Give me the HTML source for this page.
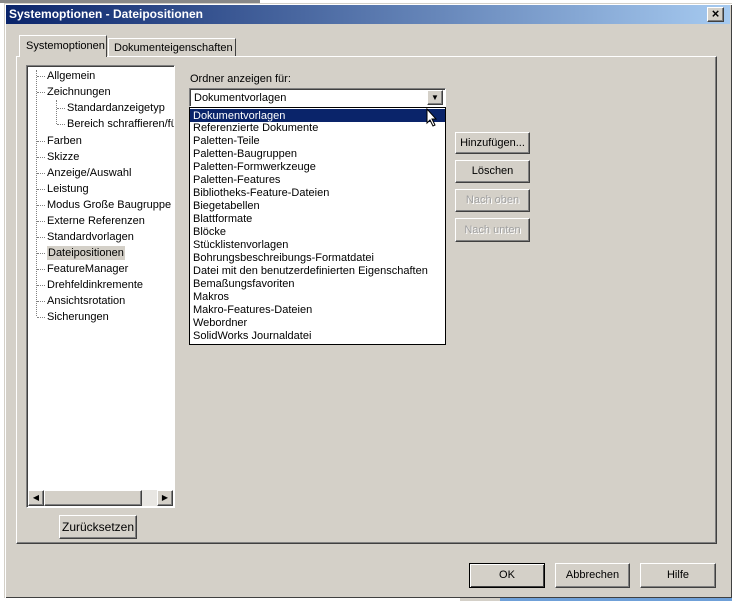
<!DOCTYPE html>
<html><head><meta charset="utf-8"><style>
*{margin:0;padding:0;box-sizing:border-box}
body{width:732px;height:601px;overflow:hidden;background:#fff;font-family:"Liberation Sans",sans-serif;font-size:11px;color:#000;position:relative}
.a{position:absolute}
.dlg{left:4px;top:3px;width:728px;height:595px;background:#d4d0c8;border-top:1px solid #d4d0c8;border-left:1px solid #d4d0c8;box-shadow:inset 1px 1px 0 #fff,inset -1px -1px 0 #404040}
.title{left:6px;top:5px;width:724px;height:19px;background:linear-gradient(90deg,#0a246a,#a6caf0);color:#fff;font-weight:bold;font-size:12px;line-height:19px;padding-left:3px}
.btn{position:absolute;background:#d4d0c8;border:1px solid;border-color:#fff #404040 #404040 #fff;box-shadow:inset -1px -1px 0 #808080;text-align:center;font-size:11px}
.dis{color:#a0a0a0;text-shadow:1px 1px 0 #fff}
.tree div{position:absolute;left:20px;height:14px;line-height:14px;white-space:nowrap}
.tree div:before{content:"";position:absolute;left:-10px;top:7px;width:8px;border-top:1px dotted #808080}
.list div{height:13px;line-height:13px;padding-left:3px;white-space:nowrap}
</style></head><body>
<div class="a" style="left:0;top:0;width:5px;height:601px;background:#fff"></div>
<div class="a" style="left:0;top:0;width:260px;height:3px;background:#888"></div>
<div class="a" style="left:0;top:597px;width:732px;height:4px;background:#d4d0c8"></div>
<div class="a" style="left:0;top:597px;width:460px;height:4px;background:#fff"></div>
<div class="a" style="left:500px;top:597px;width:232px;height:4px;background:#6fa0d8"></div>
<div class="a dlg"></div>
<div class="a title">Systemoptionen - Dateipositionen</div>
<div class="btn" style="left:707px;top:7px;width:17px;height:15px;line-height:12px;font-size:13px;font-weight:bold">×</div>

<div class="a" style="left:16px;top:56px;width:701px;height:488px;border:1px solid;border-color:#fff #404040 #404040 #fff;box-shadow:inset -1px -1px 0 #808080"></div>
<div class="a" style="left:19px;top:35px;width:88px;height:22px;background:#d4d0c8;border:1px solid;border-color:#fff #404040 transparent #fff;border-bottom:none;line-height:21px;padding-left:6px">Systemoptionen</div>
<div class="a" style="left:108px;top:38px;width:128px;height:18px;border:1px solid;border-color:#fff #404040 transparent #fff;border-bottom:none;line-height:18px;padding-left:5px">Dokumenteigenschaften</div>

<div class="a" style="left:26px;top:65px;width:149px;height:443px;background:#fff;border:1px solid;border-color:#808080 #fff #fff #808080;box-shadow:inset 1px 1px 0 #404040"></div>
<div class="a" style="left:36px;top:70px;height:246px;border-left:1px dotted #808080"></div>
<div class="a" style="left:56px;top:100px;height:24px;border-left:1px dotted #808080"></div>
<div class="a tree" style="left:27px;top:69px;width:147px;height:420px;overflow:hidden">
<div style="top:0">Allgemein</div>
<div style="top:16px">Zeichnungen</div>
<div style="top:32px;left:40px">Standardanzeigetyp</div>
<div style="top:48px;left:40px">Bereich schraffieren/füllen</div>
<div style="top:65px">Farben</div>
<div style="top:81px">Skizze</div>
<div style="top:97px">Anzeige/Auswahl</div>
<div style="top:113px">Leistung</div>
<div style="top:129px">Modus Große Baugruppe</div>
<div style="top:145px">Externe Referenzen</div>
<div style="top:161px">Standardvorlagen</div>
<div style="top:177px;background:#d4d0c8;padding:0 1px">Dateipositionen</div>
<div style="top:193px">FeatureManager</div>
<div style="top:209px">Drehfeldinkremente</div>
<div style="top:225px">Ansichtsrotation</div>
<div style="top:241px">Sicherungen</div>
</div>
<div class="a" style="left:28px;top:490px;width:145px;height:16px;background:#e8e6e2"></div>
<div class="btn" style="left:28px;top:490px;width:16px;height:16px;font-size:8px;line-height:14px">◀</div>
<div class="btn" style="left:44px;top:490px;width:98px;height:16px"></div>
<div class="btn" style="left:157px;top:490px;width:16px;height:16px;font-size:8px;line-height:14px">▶</div>
<div class="btn" style="left:59px;top:515px;width:78px;height:24px;line-height:22px;font-size:12px">Zurücksetzen</div>

<div class="a" style="left:190px;top:73px">Ordner anzeigen für:</div>
<div class="a" style="left:189px;top:88px;width:257px;height:19px;background:#fff;border:1px solid;border-color:#808080 #fff #fff #808080;box-shadow:inset 1px 1px 0 #404040;line-height:18px;padding-left:4px">Dokumentvorlagen</div>
<div class="btn" style="left:427px;top:90px;width:16px;height:15px;font-size:8px;line-height:13px">▼</div>
<div class="a list" style="left:189px;top:107px;width:257px;height:238px;background:#fff;border:1px solid #000;padding-top:1px">
<div style="background:#0a246a;color:#fff;line-height:14px">Dokumentvorlagen</div>
<div>Referenzierte Dokumente</div><div>Paletten-Teile</div><div>Paletten-Baugruppen</div><div>Paletten-Formwerkzeuge</div><div>Paletten-Features</div><div>Bibliotheks-Feature-Dateien</div><div>Biegetabellen</div><div>Blattformate</div><div>Blöcke</div><div>Stücklistenvorlagen</div><div>Bohrungsbeschreibungs-Formatdatei</div><div>Datei mit den benutzerdefinierten Eigenschaften</div><div>Bemaßungsfavoriten</div><div>Makros</div><div>Makro-Features-Dateien</div><div>Webordner</div><div>SolidWorks Journaldatei</div>
</div>
<svg class="a" style="left:426px;top:108px" width="12" height="20"><path d="M1 1 L1 15 L4 12 L7 18 L9 17 L6 11 L10 11 Z" fill="#fff" stroke="#000" stroke-width="1"/></svg>

<div class="btn" style="left:455px;top:132px;width:75px;height:22px;line-height:20px">Hinzufügen...</div>
<div class="btn" style="left:455px;top:160px;width:75px;height:23px;line-height:21px">Löschen</div>
<div class="btn dis" style="left:455px;top:189px;width:75px;height:23px;line-height:21px">Nach oben</div>
<div class="btn dis" style="left:455px;top:218px;width:75px;height:24px;line-height:22px">Nach unten</div>

<div class="btn" style="left:469px;top:563px;width:76px;height:25px;line-height:23px;border:1px solid #000;box-shadow:inset 1px 1px 0 #fff,inset -1px -1px 0 #404040">OK</div>
<div class="btn" style="left:555px;top:563px;width:75px;height:25px;line-height:23px">Abbrechen</div>
<div class="btn" style="left:640px;top:563px;width:76px;height:25px;line-height:23px">Hilfe</div>
</body></html>
